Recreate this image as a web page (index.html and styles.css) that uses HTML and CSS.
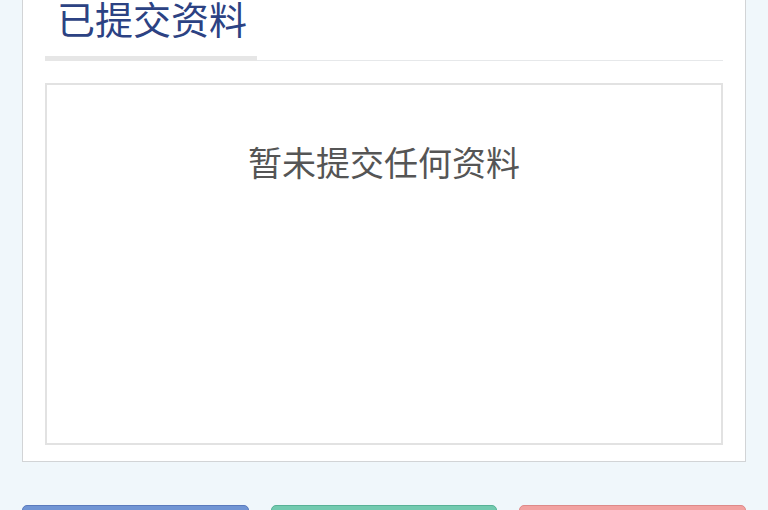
FILE: index.html
```html
<!DOCTYPE html>
<html lang="zh-CN">
<head>
<meta charset="utf-8">
<title>已提交资料</title>
<link rel="stylesheet" href="styles.css">
</head>
<body>
<div class="page">
  <section class="card">
    <div class="tabs">
      <div class="tab"><span class="tab-title">已提交资料</span></div>
    </div>
    <div class="panel">
      <p class="empty">暂未提交任何资料</p>
    </div>
  </section>
  <div class="actions">
    <button class="btn btn-blue">上一步</button>
    <button class="btn btn-green">提交</button>
    <button class="btn btn-red">取消</button>
  </div>
</div>
</body>
</html>
```

FILE: styles.css
```css
html, body {
  margin: 0;
  padding: 0;
  background: #f0f7fb;
  font-family: "Noto Sans CJK SC", "Noto Sans", sans-serif;
}
.page {
  padding: 0 22px;
  display: flex;
  flex-direction: column;
}
.card {
  background: #fff;
  border: 1px solid #d2d4d6;
  border-top: none;
  padding: 0 22px 16px;
  display: flex;
  flex-direction: column;
}
.tabs {
  display: flex;
  border-bottom: 1px solid #e6e8ea;
  margin-top: -5px;
}
.tab {
  width: 212px;
  box-sizing: border-box;
  padding: 0 0 16px 12px;
  border-bottom: 5px solid #e6e6e6;
  margin-bottom: -1px;
}
.tab-title {
  display: block;
  font-size: 38px;
  line-height: 45px;
  color: #2c4283;
}
.panel {
  margin-top: 22px;
  height: 358px;
  border: 2px solid #e2e2e2;
  display: flex;
  flex-direction: column;
  align-items: center;
}
.empty {
  margin: 57px 0 0;
  font-size: 34px;
  line-height: 40px;
  color: #555;
}
.actions {
  margin-top: 43px;
  display: flex;
  gap: 22px;
}
.btn {
  flex: 1;
  height: 50px;
  border-radius: 5px;
  font-family: inherit;
  font-size: 30px;
  color: #fff;
  border: 1px solid transparent;
}
.btn-blue { background: #7195d4; border-color: #5b7bbd; }
.btn-green { background: #72caaf; border-color: #58b296; }
.btn-red { background: #f2a2a1; border-color: #df8a89; }
```
